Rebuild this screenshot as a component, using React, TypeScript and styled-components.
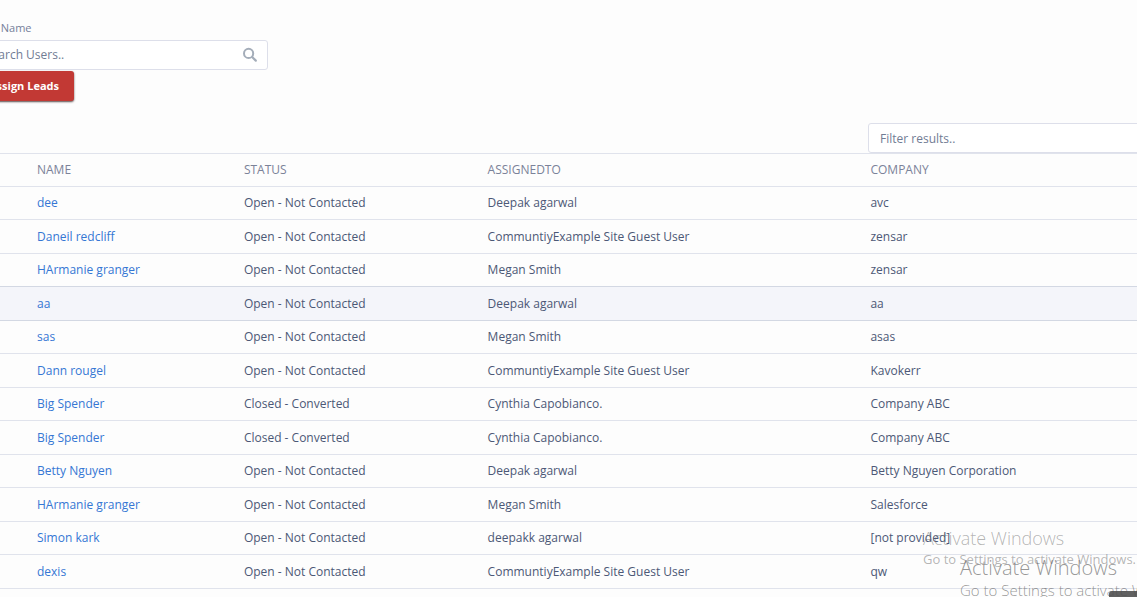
import React from "react";
import styled, { createGlobalStyle } from "styled-components";

const GlobalStyle = createGlobalStyle`
  *, *::before, *::after { box-sizing: border-box; }
  body {
    margin: 0;
    background: #fdfdfd;
    color: #4c5876;
    font: 12px/18px "Open Sans", "Noto Sans", sans-serif;
    overflow: hidden;
  }
`;

const Viewport = styled.div`
  position: relative;
  height: 100vh;
  overflow: hidden;
`;

const Page = styled.main`
  margin: 0 -26px;
  padding-top: 19px;
`;

const SearchForm = styled.form`
  display: flex;
  flex-direction: column;
  align-items: flex-start;
`;

const Label = styled.label`
  color: #75809a;
  font-size: 11px;
  margin-bottom: 3px;
`;

const SearchBox = styled.div`
  display: flex;
  align-items: center;
  width: 294px;
  height: 30px;
  padding: 0 9px 0 10px;
  border: 1px solid #dddfea;
  border-radius: 3px;
  background: #fff;
`;

const TextInput = styled.input`
  flex: 1;
  min-width: 0;
  padding: 0;
  border: 0;
  outline: 0;
  background: transparent;
  font: inherit;
  color: #4f5b78;
  &::placeholder { color: #717c94; opacity: 1; }
`;

const AssignButton = styled.button`
  height: 30px;
  margin-top: 1px;
  padding: 0 15px;
  border: 0;
  border-radius: 3px;
  background: #c23934;
  box-shadow: 0 1px 2px rgba(50, 30, 30, 0.8);
  color: #fff;
  font: 700 11px/18px "Open Sans", sans-serif;
`;

const FilterBar = styled.div`
  display: flex;
  justify-content: flex-end;
  margin-top: 22px;
`;

const FilterInput = styled(TextInput)`
  flex: 0 0 295px;
  height: 30px;
  padding: 0 11px;
  border: 1px solid #dddfea;
  border-radius: 3px;
  background: #fff;
`;

const Table = styled.table`
  width: 100%;
  table-layout: fixed;
  border-collapse: separate;
  border-spacing: 0;
`;

const Column = styled.col<{ $width?: string }>`
  width: ${(p) => p.$width ?? "auto"};
`;

const HeaderCell = styled.th`
  height: 34px;
  padding: 0 8px;
  border-top: 1px solid #e0e3ec;
  border-bottom: 1px solid #e0e3ec;
  color: #7b8299;
  font-weight: 400;
  text-align: left;
  text-transform: uppercase;
`;

const Cell = styled.td`
  padding: 0 8px;
  border-bottom: 1px solid #e0e3ec;
  white-space: nowrap;
`;

const Row = styled.tr<{ $active?: boolean }>`
  height: 34px;
  background: ${(p) => (p.$active ? "#f4f5fa" : "transparent")};
  &:nth-child(odd) { height: 33px; }
  ${Cell} {
    ${(p) => p.$active && "border-bottom-color: #d3d8e3; box-shadow: 0 -1px #d3d8e3;"}
  }
`;

const LeadLink = styled.a`
  color: #3577d4;
  text-decoration: none;
`;

const Watermark = styled.div<{ $left: number; $top: number; $large?: boolean }>`
  position: absolute;
  left: ${(p) => p.$left}px;
  top: ${(p) => p.$top}px;
  color: ${(p) => (p.$large ? "rgba(80, 80, 80, 0.6)" : "rgba(100, 100, 100, 0.48)")};
  font-size: ${(p) => (p.$large ? 15 : 13)}px;
  font-weight: ${(p) => (p.$large ? 300 : 400)};
  line-height: ${(p) => (p.$large ? 20 : 18)}px;
  white-space: nowrap;
  pointer-events: none;
`;

const WatermarkTitle = styled.div<{ $large?: boolean }>`
  font-size: ${(p) => (p.$large ? 20 : 18)}px;
  font-weight: 300;
  line-height: 24px;
`;

const CornerTab = styled.div`
  position: absolute;
  right: 0;
  bottom: 0;
  width: 28px;
  height: 6px;
  border-top-left-radius: 3px;
  background: #616161;
`;

const SearchIcon = () => (
  <svg width="16" height="16" viewBox="0 0 16 16" fill="none" stroke="#a4adb9" strokeLinecap="round" aria-hidden="true">
    <circle cx="6.6" cy="6.4" r="4.6" strokeWidth="2" />
    <path d="M10.4 10.2L13.8 13.6" strokeWidth="2.2" />
  </svg>
);

const open = "Open - Not Contacted";
const closed = "Closed - Converted";
const guest = "CommuntiyExample Site Guest User";

const leads = [
  ["dee", open, "Deepak agarwal", "avc"],
  ["Daneil redcliff", open, guest, "zensar"],
  ["HArmanie granger", open, "Megan Smith", "zensar"],
  ["aa", open, "Deepak agarwal", "aa"],
  ["sas", open, "Megan Smith", "asas"],
  ["Dann rougel", open, guest, "Kavokerr"],
  ["Big Spender", closed, "Cynthia Capobianco.", "Company ABC"],
  ["Big Spender", closed, "Cynthia Capobianco.", "Company ABC"],
  ["Betty Nguyen", open, "Deepak agarwal", "Betty Nguyen Corporation"],
  ["HArmanie granger", open, "Megan Smith", "Salesforce"],
  ["Simon kark", open, "deepakk agarwal", "[not provided]"],
  ["dexis", open, guest, "qw"],
];

const activeRow = 3;

export default function App() {
  return (
    <Viewport>
      <GlobalStyle />
      <Page>
        <SearchForm onSubmit={(e) => e.preventDefault()}>
          <Label htmlFor="user-name">User Name</Label>
          <SearchBox>
            <TextInput id="user-name" type="text" placeholder="Search Users.." />
            <SearchIcon />
          </SearchBox>
          <AssignButton type="submit">Assign Leads</AssignButton>
        </SearchForm>
        <FilterBar>
          <FilterInput type="text" aria-label="Filter results" placeholder="Filter results.." />
        </FilterBar>
        <Table>
          <colgroup>
            <Column $width="55px" />
            <Column $width="17.4%" />
            <Column $width="20.5%" />
            <Column $width="32.2%" />
            <Column />
          </colgroup>
          <thead>
            <tr>
              <HeaderCell />
              <HeaderCell scope="col">Name</HeaderCell>
              <HeaderCell scope="col">Status</HeaderCell>
              <HeaderCell scope="col">AssignedTo</HeaderCell>
              <HeaderCell scope="col">Company</HeaderCell>
            </tr>
          </thead>
          <tbody>
            {leads.map(([name, status, owner, company], i) => (
              <Row key={i} $active={i === activeRow}>
                <Cell />
                <Cell><LeadLink href="#">{name}</LeadLink></Cell>
                <Cell>{status}</Cell>
                <Cell>{owner}</Cell>
                <Cell>{company}</Cell>
              </Row>
            ))}
          </tbody>
        </Table>
      </Page>
      <Watermark $left={923} $top={526}>
        <WatermarkTitle>Activate Windows</WatermarkTitle>
        Go to Settings to activate Windows.
      </Watermark>
      <CornerTab />
      <Watermark $left={960} $top={556} $large>
        <WatermarkTitle $large>Activate Windows</WatermarkTitle>
        Go to Settings to activate Windows.
      </Watermark>
    </Viewport>
  );
}
